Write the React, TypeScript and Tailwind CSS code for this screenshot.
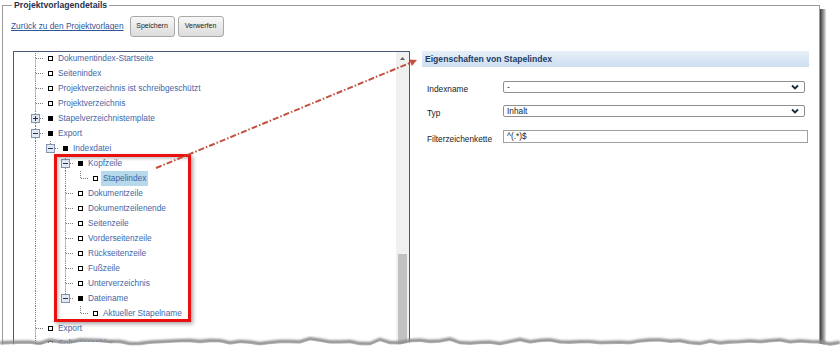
import React from "react";

type Row = {
  label: string;
  level: number;
  guides: boolean[];
  expand?: "plus" | "minus";
  filled?: boolean;
  last?: boolean;
  selected?: boolean;
};

const rows: Row[] = [
  { label: "Dokumentindex-Startseite", level: 0, guides: [] },
  { label: "Seitenindex", level: 0, guides: [] },
  { label: "Projektverzeichnis ist schreibgeschützt", level: 0, guides: [] },
  { label: "Projektverzeichnis", level: 0, guides: [] },
  { label: "Stapelverzeichnistemplate", level: 0, guides: [], expand: "plus", filled: true },
  { label: "Export", level: 0, guides: [], expand: "minus", filled: true },
  { label: "Indexdatei", level: 1, guides: [true], expand: "minus", filled: true, last: true },
  { label: "Kopfzeile", level: 2, guides: [true, false], expand: "minus", filled: true },
  { label: "Stapelindex", level: 3, guides: [true, false, true], last: true, selected: true },
  { label: "Dokumentzeile", level: 2, guides: [true, false] },
  { label: "Dokumentzeilenende", level: 2, guides: [true, false] },
  { label: "Seitenzeile", level: 2, guides: [true, false] },
  { label: "Vorderseitenzeile", level: 2, guides: [true, false] },
  { label: "Rückseitenzeile", level: 2, guides: [true, false] },
  { label: "Fußzeile", level: 2, guides: [true, false] },
  { label: "Unterverzeichnis", level: 2, guides: [true, false] },
  { label: "Dateiname", level: 2, guides: [true, false], expand: "minus", filled: true, last: true },
  { label: "Aktueller Stapelname", level: 3, guides: [true, false, false], last: true },
  { label: "Export", level: 0, guides: [] },
  { label: "Softwarezähler", level: 0, guides: [] },
];

const DOT = "1 1";
const LINE = "#7d7d7d";

function Guide({ on }: { on: boolean }) {
  return (
    <svg width="15" height="15" className="shrink-0">
      {on && <line x1="7.5" y1="0" x2="7.5" y2="15" stroke={LINE} strokeDasharray={DOT} />}
    </svg>
  );
}

function Connector({ expand, last }: { expand?: "plus" | "minus"; last?: boolean }) {
  return (
    <svg width="15" height="15" className="shrink-0">
      <line x1="7.5" y1="0" x2="7.5" y2={expand ? 3 : 7.5} stroke={LINE} strokeDasharray={DOT} />
      {!last && (
        <line x1="7.5" y1={expand ? 12 : 7.5} x2="7.5" y2="15" stroke={LINE} strokeDasharray={DOT} />
      )}
      <line x1={expand ? 12 : 8} y1="7.5" x2="15" y2="7.5" stroke={LINE} strokeDasharray={DOT} />
      {expand && (
        <>
          <rect x="3.5" y="3.5" width="8" height="8" fill="#e4e9f1" stroke="#8393ae" />
          <line x1="5" y1="7.5" x2="10" y2="7.5" stroke="#1d3463" />
          {expand === "plus" && <line x1="7.5" y1="5" x2="7.5" y2="10" stroke="#1d3463" />}
        </>
      )}
    </svg>
  );
}

function TreeRow({ row }: { row: Row }) {
  return (
    <div className="flex h-[15px] items-center pl-[14px]">
      {row.guides.map((g, i) => (
        <Guide key={i} on={g} />
      ))}
      <Connector expand={row.expand} last={row.last} />
      <div className="flex w-[15px] shrink-0 items-center">
        <span
          className={`ml-[5px] block h-[5px] w-[5px] ${
            row.filled ? "bg-black" : "border border-black bg-white"
          }`}
        />
      </div>
      <span
        className={`whitespace-nowrap leading-[15px] text-[#3f68a8] ${
          row.selected ? "-ml-[2px] bg-[#b6d9ec] px-[2px]" : ""
        }`}
      >
        {row.label}
      </span>
    </div>
  );
}

function Chevron() {
  return (
    <svg width="8" height="6" className="shrink-0">
      <polyline points="1,1.5 4,4.5 7,1.5" fill="none" stroke="#1c2a44" strokeWidth="1.8" />
    </svg>
  );
}

function SelectBox({ value }: { value: string }) {
  return (
    <div className="flex h-[12px] w-[302px] items-center justify-between rounded-[2px] border border-[#8f8f8f] bg-white pl-[3px] pr-[5px] leading-none text-[#222]">
      <span>{value}</span>
      <Chevron />
    </div>
  );
}

// torn paper edge: mostly flat with a few soft bumps
const tear = Array.from({ length: 85 }, (_, i) => {
  const x = i * 10;
  const y =
    12 +
    1.3 * Math.sin(i * 0.55) +
    0.9 * Math.sin(i * 1.9 + 1.3) +
    (i % 7 === 3 ? -1.6 : 0) +
    (i % 11 === 5 ? -1.2 : 0);
  return [x, y] as const;
});
const tearLine = tear.map(([x, y], i) => `${i ? "L" : "M"}${x},${y.toFixed(1)}`).join(" ");
const tearFill =
  tear.map(([x, y], i) => `${i ? "L" : "M"}${x},${(y + 1.8).toFixed(1)}`).join(" ") + " L840,30 L0,30 Z";

export default function App() {
  return (
    <div className="relative h-[355px] w-[840px] overflow-hidden bg-white font-['Liberation_Sans',Arial,sans-serif] text-[8.3px]">
      <fieldset className="ml-[2px] h-[420px] w-[818px] border border-[#9a9a9a] p-0">
        <legend className="ml-[9px] px-[2px] text-[8.7px] font-bold leading-[10px] text-[#1f3050]">
          Projektvorlagendetails
        </legend>
        <div className="pl-[8px]">
          <div className="mt-[6px] flex h-[21px] items-center">
            <a className="mr-[6px] cursor-pointer text-[#2f5597] underline">Zurück zu den Projektvorlagen</a>
            <button className="h-[21px] w-[45px] rounded-[3px] border border-[#a8a8a8] bg-gradient-to-b from-[#f8f8f8] to-[#dcdcdc] text-[7px] text-[#222]">
              Speichern
            </button>
            <button className="ml-[3px] h-[21px] w-[46px] rounded-[3px] border border-[#a8a8a8] bg-gradient-to-b from-[#f8f8f8] to-[#dcdcdc] text-[7px] text-[#222]">
              Verwerfen
            </button>
          </div>

          <div className="mt-[14px] flex items-start pl-[2px]">
            {/* Tree */}
            <div className="flex h-[330px] w-[397px] border border-[#4b587c]">
              <div className="flex-1 overflow-hidden">
                <div className="-mt-[1px]">
                  {rows.map((r, i) => (
                    <TreeRow key={i} row={r} />
                  ))}
                </div>
              </div>
              <div className="flex w-[13px] flex-col bg-[#f0f0f0]">
                <svg width="13" height="12" className="shrink-0">
                  <polygon points="4,8 9,8 6.5,5" fill="#606060" />
                </svg>
                <div className="mx-[2px] mt-[190px] h-[200px] w-[9px] bg-[#c1c1c1]" />
              </div>
            </div>

            {/* Properties */}
            <div className="ml-[12px] w-[387px]">
              <div className="flex h-[16px] items-center bg-gradient-to-b from-[#e7eff8] to-[#cddff1] pl-[3px] text-[8.6px] font-bold text-[#1d3a62]">
                Eigenschaften von Stapelindex
              </div>
              <div className="mt-[14px] flex items-start">
                <div className="w-[81px] pl-[5px] pt-[2px] leading-[12px] text-[#222]">Indexname</div>
                <SelectBox value="-" />
              </div>
              <div className="mt-[10px] flex items-start">
                <div className="w-[81px] pl-[5px] pt-[2px] leading-[12px] text-[#222]">Typ</div>
                <SelectBox value="Inhalt" />
              </div>
              <div className="mt-[11px] flex items-start">
                <div className="w-[81px] pl-[5px] pt-[3px] leading-[12px] text-[#222]">Filterzeichenkette</div>
                <div className="flex h-[13px] w-[305px] items-center border border-[#a0a0a0] bg-white pl-[3px] leading-none text-[#222]">
                  ^(.*)$
                </div>
              </div>
            </div>
          </div>
        </div>
      </fieldset>

      {/* right drop shadow of the captured window */}
      <div className="absolute left-[820px] top-[9px] h-[336px] w-[6px] bg-gradient-to-r from-[#3e3e3e] via-[#8a8a8a] to-[#e6e6e6]" />

      {/* red highlight frame */}
      <div className="absolute left-[54px] top-[154px] h-[168px] w-[137px] border-[3px] border-[#ea1010] shadow-[inset_2px_2px_3px_rgba(0,0,0,0.22),2px_2px_4px_rgba(0,0,0,0.35)]" />

      {/* annotation arrow */}
      <svg className="pointer-events-none absolute left-0 top-0" width="840" height="355">
        <line
          x1="156"
          y1="168"
          x2="410.5"
          y2="62.7"
          stroke="#c4513f"
          strokeWidth="2"
          strokeDasharray="6 2 1.5 2"
        />
        <polygon points="417,60 411.8,65.9 409.2,59.5" fill="#c4513f" />
      </svg>

      {/* torn bottom edge */}
      <svg className="pointer-events-none absolute left-0 top-[330px]" width="840" height="30">
        <defs>
          <filter id="tearBlur" x="-5%" y="-50%" width="110%" height="200%">
            <feGaussianBlur stdDeviation="1" />
          </filter>
        </defs>
        <path d={tearLine} fill="none" stroke="#8c8c8c" strokeWidth="3.5" filter="url(#tearBlur)" />
        <path d={tearFill} fill="#ffffff" />
      </svg>
    </div>
  );
}
